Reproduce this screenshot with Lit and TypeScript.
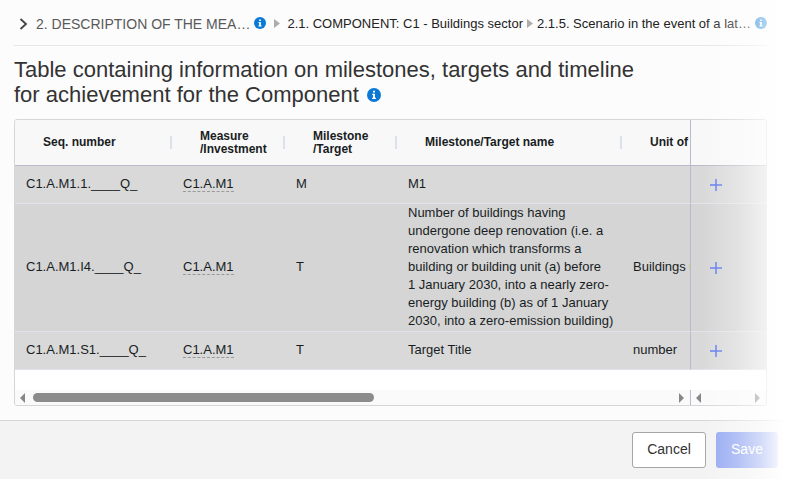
import { LitElement, html, css, svg } from "lit";
import { customElement, property } from "lit/decorators.js";

interface Row {
  seq: string;
  measure: string;
  kind: string;
  name: string;
  unit: string;
}

const rows: Row[] = [
  { seq: "C1.A.M1.1.____Q_", measure: "C1.A.M1", kind: "M", name: "M1", unit: "" },
  {
    seq: "C1.A.M1.I4.____Q_",
    measure: "C1.A.M1",
    kind: "T",
    name: "Number of buildings having undergone deep renovation (i.e. a renovation which transforms a building or building unit (a) before 1\u00a0January 2030, into a nearly zero-energy building (b) as of 1 January 2030, into a zero-emission building)",
    unit: "Buildings u",
  },
  { seq: "C1.A.M1.S1.____Q_", measure: "C1.A.M1", kind: "T", name: "Target Title", unit: "number" },
];

@customElement("info-icon")
export class InfoIcon extends LitElement {
  @property({ type: Number }) size = 12;

  static styles = css`
    :host { display: inline-flex; flex: none; }
    svg { display: block; }
  `;

  render() {
    return html`<svg width=${this.size} height=${this.size} viewBox="0 0 14 14" role="img" aria-label="Information">
      ${svg`<circle cx="7" cy="7" r="7" fill="#0a7ad6"/>
      <path d="M6 2.8h2v1.8H6zM5.2 5.8H8v4h.9V11H5.1V9.8H6V7h-.8z" fill="#fff"/>`}
    </svg>`;
  }
}

@customElement("scroll-arrow")
export class ScrollArrow extends LitElement {
  @property() direction: "left" | "right" = "right";

  static styles = css`
    :host { display: inline-flex; flex: none; }
    svg { display: block; }
  `;

  render() {
    const d = this.direction === "left" ? "M5 0v10L0 5z" : "M0 0v10l5-5z";
    return html`<svg width="5" height="10" viewBox="0 0 5 10" aria-hidden="true">
      ${svg`<path d=${d} fill="#878787"/>`}
    </svg>`;
  }
}

@customElement("app-root")
export class AppRoot extends LitElement {
  static styles = css`
    :host {
      display: block;
      position: relative;
      min-height: 100vh;
      background: #fcfcfc;
      color: #222;
      font-family: "Liberation Sans", Arial, sans-serif;
      font-size: 13px;
    }
    *, *::before, *::after { box-sizing: border-box; }
    .page { display: flex; flex-direction: column; min-height: 100vh; }
    .content { flex: 1; padding: 0 23px 14px 14px; }

    .crumbs {
      display: flex;
      align-items: center;
      height: 46px;
      padding: 2px 0 0 5px;
      border-bottom: 1px solid #e6e6e6;
      white-space: nowrap;
    }
    .crumbs a { flex: none; color: inherit; text-decoration: none; }
    .crumbs .section { margin: 0 4px 0 8px; font-size: 14px; color: #595959; }
    .crumbs .component { margin: 0 4px 0 7px; }
    .crumbs .scenario { margin: 0 auto 0 4px; }
    .crumbs svg { flex: none; display: block; }
    .crumbs info-icon { margin-bottom: 2px; }
    .next { margin-left: 8px; }

    h1 {
      max-width: 640px;
      margin: 11px 0 12px;
      font-size: 22px;
      line-height: 25px;
      font-weight: 400;
      color: #333;
    }
    h1 info-icon { margin-left: 2px; }

    .grid {
      background: #fff;
      border: 1px solid #d6d6da;
      border-radius: 3px;
      overflow: hidden;
    }
    table { width: 100%; table-layout: fixed; border-collapse: separate; border-spacing: 0; }
    .c-seq { width: 157px; }
    .c-measure { width: 113px; }
    .c-kind { width: 112px; }
    .c-name { width: 225px; }
    .c-add { width: 76px; }
    th {
      height: 46px;
      padding: 0 0 0 28px;
      border-bottom: 1px solid #babbc8;
      background: #f8f8f8 linear-gradient(#dde1ec, #dde1ec) right 0 center / 2px 13px no-repeat;
      text-align: left;
      font-size: 12px;
      line-height: 13px;
      font-weight: 700;
      color: #181d1f;
      overflow: hidden;
    }
    th:nth-child(n + 5) { background-image: none; white-space: nowrap; }
    td {
      height: 38px;
      padding: 0 2px 1px 11px;
      border-bottom: 1px solid #e2e2ea;
      background: #d9d9d9;
      line-height: 18px;
      vertical-align: middle;
      overflow: hidden;
      color: #181d1f;
    }
    tr:nth-child(even) td { background: #d5d5d5; }
    td.unit { padding-right: 0; white-space: nowrap; }
    th:last-child, td.add { border-left: 1px solid #babbc8; }
    td.add { padding: 0 0 0 19px; }
    td.add button {
      display: block;
      padding: 0;
      border: 0;
      background: none;
    }
    td.add svg { display: block; }
    .tip { border-bottom: 1px dashed #999; }

    .scrollbars { display: flex; margin-top: 20px; height: 15px; background: #fafafa; }
    .track { display: flex; align-items: center; flex: 1; padding: 0 6px 0 5px; gap: 8px; }
    .lane { flex: 1; }
    .thumb { width: 53.5%; height: 9px; border-radius: 5px; background: #8b8b8b; }
    .pinned {
      display: flex;
      align-items: center;
      justify-content: space-between;
      width: 76px;
      padding: 0 6px 0 5px;
      border-left: 1px solid #babbc8;
    }

    footer {
      display: flex;
      justify-content: flex-end;
      gap: 10px;
      padding: 11px 12px 11px;
      border-top: 1px solid #d6d6d6;
      background: #f3f3f3;
    }
    footer button {
      height: 36px;
      padding: 0 0 2px;
      border-radius: 3px;
      font: 14px/18px "Liberation Sans", Arial, sans-serif;
    }
    .cancel { width: 74px; border: 1px solid #a6a6a6; background: #fff; color: #333; }
    .save { width: 62px; border: 0; background: #92a6f1; color: #fff; }

    .fade {
      position: absolute;
      inset: 0 0 0 auto;
      width: 88px;
      background: linear-gradient(
        to right,
        rgba(255, 255, 255, 0),
        rgba(255, 255, 255, 0.3) 40%,
        rgba(255, 255, 255, 0.65) 71%,
        rgba(255, 255, 255, 0.95) 90%,
        #fff
      );
      pointer-events: none;
    }
  `;

  private separator(cls = "") {
    return html`<svg class=${cls} width="6" height="9" viewBox="0 0 6 9" aria-hidden="true">
      <path d="M0 0v9l6-4.5z" fill="#adadad" />
    </svg>`;
  }

  render() {
    return html`
      <div class="page">
        <main class="content">
          <nav class="crumbs" aria-label="Breadcrumb">
            <svg width="9" height="12" viewBox="0 0 9 12" aria-hidden="true">
              <path d="M1.5 1l5.5 5-5.5 5" fill="none" stroke="#444" stroke-width="1.8" />
            </svg>
            <a class="section" href="#section">2. DESCRIPTION OF THE MEA…</a>
            <info-icon></info-icon>
            ${this.separator("next")}
            <a class="component" href="#component">2.1. COMPONENT: C1 - Buildings sector</a>
            ${this.separator()}
            <a class="scenario" href="#scenario">2.1.5. Scenario in the event of a lat…</a>
            <info-icon></info-icon>
          </nav>
          <h1>
            Table containing information on milestones, targets and timeline for achievement for the
            Component <info-icon size="14"></info-icon>
          </h1>
          <div class="grid">
            <table>
              <colgroup>
                <col class="c-seq" /><col class="c-measure" /><col class="c-kind" />
                <col class="c-name" /><col /><col class="c-add" />
              </colgroup>
              <thead>
                <tr>
                  <th scope="col">Seq. number</th>
                  <th scope="col">Measure /Investment</th>
                  <th scope="col">Milestone /Target</th>
                  <th scope="col">Milestone/Target name</th>
                  <th scope="col">Unit of</th>
                  <th scope="col" aria-label="Actions"></th>
                </tr>
              </thead>
              <tbody>
                ${rows.map(
                  (r) => html`<tr>
                    <td>${r.seq}</td>
                    <td><span class="tip">${r.measure}</span></td>
                    <td>${r.kind}</td>
                    <td>${r.name}</td>
                    <td class="unit">${r.unit}</td>
                    <td class="add">
                      <button type="button" aria-label="Add">
                        <svg width="12" height="12" viewBox="0 0 12 12">
                          <path d="M6 0v12M0 6h12" stroke="#5b76ec" stroke-width="1.5" />
                        </svg>
                      </button>
                    </td>
                  </tr>`
                )}
              </tbody>
            </table>
            <div class="scrollbars">
              <div class="track">
                <scroll-arrow direction="left"></scroll-arrow>
                <div class="lane"><div class="thumb"></div></div>
                <scroll-arrow></scroll-arrow>
              </div>
              <div class="pinned">
                <scroll-arrow direction="left"></scroll-arrow>
                <scroll-arrow></scroll-arrow>
              </div>
            </div>
          </div>
        </main>
        <footer>
          <button class="cancel" type="button">Cancel</button>
          <button class="save" type="button">Save</button>
        </footer>
      </div>
      <div class="fade"></div>
    `;
  }
}
